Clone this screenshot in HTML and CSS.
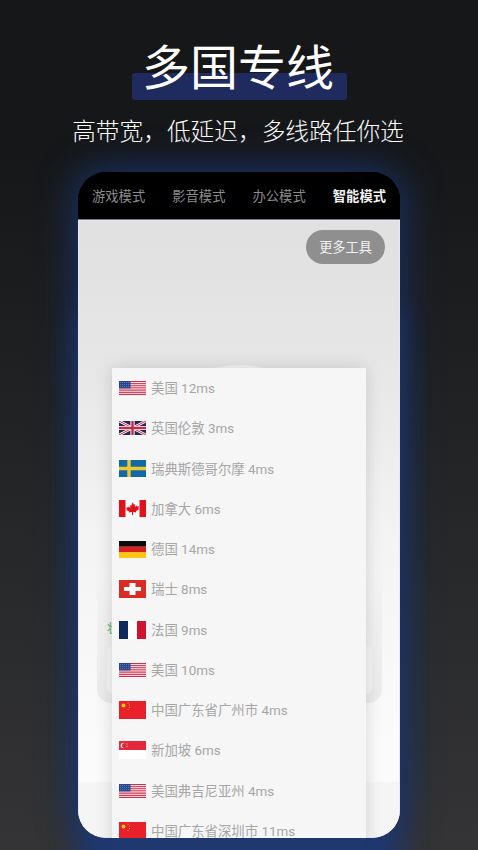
FILE: index.html
```html
<!DOCTYPE html>
<html lang="zh-CN">
<head>
<meta charset="utf-8">
<title>多国专线</title>
<link rel="stylesheet" href="styles.css">
</head>
<body>
<svg class="defs" width="0" height="0" aria-hidden="true">
  <defs>
    <symbol id="us" viewBox="0 0 27 14" preserveAspectRatio="none">
      <rect width="27" height="14" fill="#fbf3f5"/>
      <rect y="0" width="27" height="1.1" fill="#c8324f"/>
      <rect y="2.1" width="27" height="1.1" fill="#c8324f"/>
      <rect y="4.2" width="27" height="1.1" fill="#c8324f"/>
      <rect y="6.3" width="27" height="1.1" fill="#c8324f"/>
      <rect y="8.500" width="27" height="1.2" fill="#c8324f"/>
      <rect y="10.700" width="27" height="1.2" fill="#c8324f"/>
      <rect y="12.800" width="27" height="1.200" fill="#c8324f"/>
      <rect width="11.500" height="7.400" fill="#26468f"/>
      <path d="M1 1.500h10M1 3.600h10M1 5.700h10" stroke="#7f95c6" stroke-width=".7" stroke-dasharray="1 1"/>
    </symbol>
    <symbol id="uk" viewBox="0 0 27 14" preserveAspectRatio="none">
      <rect width="27" height="14" fill="#25284f"/>
      <path d="M0 0L27 14M27 0L0 14" stroke="#fff" stroke-width="2.600"/>
      <path d="M0 0L27 14M27 0L0 14" stroke="#c4284a" stroke-width="1"/>
      <path d="M13.500 0V14M0 7H27" stroke="#fff" stroke-width="4.200"/>
      <path d="M13.500 0V14M0 7H27" stroke="#c4284a" stroke-width="2.400"/>
    </symbol>
    <symbol id="se" viewBox="0 0 27 17" preserveAspectRatio="none">
      <rect width="27" height="17" fill="#0f6aa6"/>
      <path d="M10 0V17M0 8.500H27" stroke="#f2c62d" stroke-width="3.400"/>
    </symbol>
    <symbol id="ca" viewBox="0 0 27 17" preserveAspectRatio="none">
      <rect width="27" height="17" fill="#fff"/>
      <rect width="6.500" height="17" fill="#e0131c"/>
      <rect x="20.500" width="6.500" height="17" fill="#e0131c"/>
      <path d="M13.500 2.200l1.400 2.600 1.400-.7-.5 3 1.700-1.600.5 1.100 2-.3-.6 2.100.8.5-3.200 2.400.3 1.200-3.200-.4V15h-1.200v-2.900l-3.200.4.3-1.200L7 9.900l.8-.5-.6-2.100 2 .3.5-1.100 1.700 1.600-.5-3 1.400.7z" fill="#e0131c"/>
    </symbol>
    <symbol id="de" viewBox="0 0 27 17" preserveAspectRatio="none">
      <rect width="27" height="5.700" fill="#0c0c0c"/>
      <rect y="5.700" width="27" height="5.700" fill="#d9201f"/>
      <rect y="11.400" width="27" height="5.600" fill="#fbc70e"/>
    </symbol>
    <symbol id="ch" viewBox="0 0 27 18" preserveAspectRatio="none">
      <rect width="27" height="18" fill="#d82c24"/>
      <path d="M10.500 3h6v4h5.500v4h-5.500v4h-6v-4h-5.500v-4h5.500z" fill="#fff"/>
    </symbol>
    <symbol id="fr" viewBox="0 0 27 18" preserveAspectRatio="none">
      <rect width="27" height="18" fill="#fff"/>
      <rect width="9" height="18" fill="#0e2a5c"/>
      <rect x="18" width="9" height="18" fill="#cf1330"/>
    </symbol>
    <symbol id="cn" viewBox="0 0 27 18" preserveAspectRatio="none">
      <rect width="27" height="18" fill="#e8202a"/>
      <circle cx="4.500" cy="4.500" r="2" fill="#f6c21c"/>
      <circle cx="9" cy="2" r=".6" fill="#f6c21c"/>
      <circle cx="10.500" cy="4" r=".6" fill="#f6c21c"/>
      <circle cx="10.500" cy="6.500" r=".6" fill="#f6c21c"/>
      <circle cx="9" cy="8.500" r=".6" fill="#f6c21c"/>
    </symbol>
    <symbol id="sg" viewBox="0 0 27 18" preserveAspectRatio="none">
      <rect width="27" height="18" fill="#fff"/>
      <rect width="27" height="9" fill="#e3283c"/>
      <circle cx="4.500" cy="4.500" r="2.800" fill="#fff"/>
      <circle cx="5.600" cy="4.500" r="2.600" fill="#e3283c"/>
      <path d="M7.500 3h1.500M7 5.500h2" stroke="#fff" stroke-width=".7" stroke-dasharray=".7 .5"/>
    </symbol>
  </defs>
</svg>
<main class="page">
  <h1 class="title"><span class="title-text">多国专线</span></h1>
  <p class="subtitle">高带宽，低延迟，多线路任你选</p>
  <section class="phone">
    <nav class="tabs">
      <span class="tab">游戏模式</span>
      <span class="tab">影音模式</span>
      <span class="tab">办公模式</span>
      <span class="tab tab-active">智能模式</span>
    </nav>
    <div class="screen">
      <div class="tools"><button class="tools-btn">更多工具</button></div>
      <div class="bg-card">
        <span class="bg-status">状</span>
        <div class="bg-panel"></div>
      </div>
      <div class="bg-footer"></div>
      <div class="hump"></div>
      <ul class="menu">
        <li class="row"><svg class="flag flag-us"><use href="#us"/></svg><span class="label">美国 12ms</span></li>
        <li class="row"><svg class="flag flag-us"><use href="#uk"/></svg><span class="label">英国伦敦 3ms</span></li>
        <li class="row"><svg class="flag flag-md"><use href="#se"/></svg><span class="label">瑞典斯德哥尔摩 4ms</span></li>
        <li class="row"><svg class="flag flag-md"><use href="#ca"/></svg><span class="label">加拿大 6ms</span></li>
        <li class="row"><svg class="flag flag-md"><use href="#de"/></svg><span class="label">德国 14ms</span></li>
        <li class="row"><svg class="flag flag-lg"><use href="#ch"/></svg><span class="label">瑞士 8ms</span></li>
        <li class="row"><svg class="flag flag-lg"><use href="#fr"/></svg><span class="label">法国 9ms</span></li>
        <li class="row"><svg class="flag flag-us"><use href="#us"/></svg><span class="label">美国 10ms</span></li>
        <li class="row"><svg class="flag flag-lg"><use href="#cn"/></svg><span class="label">中国广东省广州市 4ms</span></li>
        <li class="row"><svg class="flag flag-lg"><use href="#sg"/></svg><span class="label">新加坡 6ms</span></li>
        <li class="row"><svg class="flag flag-us"><use href="#us"/></svg><span class="label">美国弗吉尼亚州 4ms</span></li>
        <li class="row"><svg class="flag flag-lg"><use href="#cn"/></svg><span class="label">中国广东省深圳市 11ms</span></li>
      </ul>
    </div>
  </section>
</main>
</body>
</html>
```
FILE: styles.css
```css
* { box-sizing: border-box; }
html, body { margin: 0; padding: 0; }
body {
  width: 478px;
  height: 850px;
  overflow: hidden;
  font-family: "Roboto", "Noto Sans CJK SC", sans-serif;
  background: #2a2a2c;
}
.defs { position: absolute; }
.page {
  height: 850px;
  overflow: hidden;
  display: flex;
  flex-direction: column;
  align-items: center;
  background: linear-gradient(180deg, #161719 0%, #161719 18%, #262729 62%, #343436 100%);
}
.title {
  position: relative;
  margin: 30px 0 0;
  padding-right: 2px;
  font-family: "Noto Sans CJK SC", sans-serif;
  font-weight: 400;
  font-size: 48px;
  line-height: 68px;
  color: #fff;
}
.title::before {
  content: "";
  position: absolute;
  left: -10px;
  right: -11px;
  top: 43px;
  height: 27px;
  border-radius: 3px;
  background: #1f2a5e;
}
.title-text { position: relative; }
.subtitle {
  margin: 15px 0 0;
  padding-right: 2px;
  font-family: "Noto Sans CJK SC", sans-serif;
  font-weight: 300;
  font-size: 23.7px;
  line-height: 34px;
  color: #fff;
}
.phone {
  width: 322px;
  height: 666px;
  margin-top: 25px;
  flex: none;
  border-radius: 28px;
  overflow: hidden;
  display: flex;
  flex-direction: column;
  box-shadow: 0 130px 28px -2px #1f3870, 0 0 34px 6px #183060;
  background: #000;
}
.tabs {
  height: 48px;
  flex: none;
  display: flex;
  align-items: center;
  justify-content: space-between;
  padding: 0 14px;
  background: #000;
  border-bottom: 1px solid #77777c;
}
.tab {
  font-family: "Noto Sans CJK SC", sans-serif;
  font-size: 13.3px;
  color: #8b8b8b;
}
.tab-active { color: #f2f2f2; font-weight: 700; }
.screen {
  position: relative;
  flex: 1;
  background: linear-gradient(180deg, #e0e0e0 0%, #e6e6e6 22%, #f3f3f3 50%, #fbfbfb 85%);
  box-shadow: inset 0 0 0 1px #e6e9f5;
}
.tools {
  display: flex;
  justify-content: flex-end;
  padding: 10px 15px 0 0;
}
.tools-btn {
  width: 79px;
  height: 34px;
  padding: 0 0 2px;
  border: 0;
  border-radius: 17px;
  background: #8f8f8f;
  color: #f2f2f2;
  font-family: "Noto Sans CJK SC", sans-serif;
  font-size: 13.2px;
}
.bg-card {
  position: absolute;
  left: 19px;
  top: 350px;
  width: 285px;
  height: 133px;
  border-radius: 14px;
  background: linear-gradient(180deg, #f5f5f5 0%, #f1f1f1 45%, #ebebeb 100%);
}
.bg-status {
  position: absolute;
  left: 10px;
  top: 49px;
  font-family: "Noto Sans CJK SC", sans-serif;
  font-size: 12px;
  line-height: 18px;
  color: #55b070;
}
.bg-panel {
  position: absolute;
  left: 10px;
  top: 75px;
  width: 265px;
  height: 50px;
  border-radius: 8px;
  background: #f5f5f5;
}
.bg-footer {
  position: absolute;
  left: 1px;
  right: 1px;
  bottom: 1px;
  height: 55px;
  background: #f5f5f5;
}
.hump {
  position: absolute;
  left: 125px;
  top: 145px;
  width: 72px;
  height: 24px;
  border-radius: 50%;
  background: #f5f5f5;
}
.menu {
  position: absolute;
  left: 34px;
  top: 148px;
  width: 254px;
  margin: 0;
  padding: 0;
  list-style: none;
  background: #f6f6f6;
  box-shadow: 0 0 16px rgba(0, 0, 0, 0.15);
}
.row {
  height: 40.25px;
  display: flex;
  align-items: center;
  gap: 5px;
  padding-left: 7px;
  font-family: "Roboto", "Noto Sans CJK SC", sans-serif;
  font-size: 13.4px;
  color: #a6a6a6;
  white-space: nowrap;
}
.label { padding-bottom: 2px; }
.flag { display: block; width: 27px; flex: none; }
.flag-us { height: 14px; }
.flag-md { height: 17px; }
.flag-lg { height: 18px; }
```
